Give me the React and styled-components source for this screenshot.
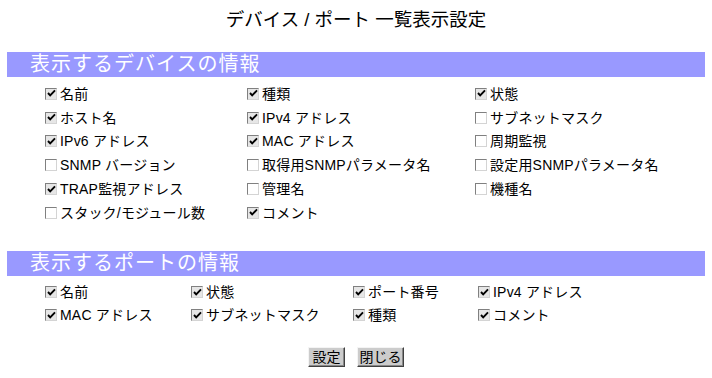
import React, { useState } from 'react';
import styled, { createGlobalStyle } from 'styled-components';

const GlobalStyle = createGlobalStyle`
  html, body {
    margin: 0;
    padding: 0;
    background: #ffffff;
  }
  body {
    font-family: "Liberation Sans", "Noto Sans CJK JP", sans-serif;
    color: #000000;
  }
`;

const deviceItems = [
  ['名前', true], ['種類', true], ['状態', true],
  ['ホスト名', true], ['IPv4 アドレス', true], ['サブネットマスク', false],
  ['IPv6 アドレス', true], ['MAC アドレス', true], ['周期監視', false],
  ['SNMP バージョン', false], ['取得用SNMPパラメータ名', false], ['設定用SNMPパラメータ名', false],
  ['TRAP監視アドレス', true], ['管理名', false], ['機種名', false],
  ['スタック/モジュール数', false], ['コメント', true],
];

const portItems = [
  ['名前', true], ['状態', true], ['ポート番号', true], ['IPv4 アドレス', true],
  ['MAC アドレス', true], ['サブネットマスク', true], ['種類', true], ['コメント', true],
];

function CheckItem({ label, initial }) {
  const [checked, setChecked] = useState(initial);
  return (
    <Item onClick={() => setChecked(!checked)}>
      <Box $checked={checked}>
        {checked && (
          <svg width="9" height="9" viewBox="0 0 9 9">
            <polyline points="1,4 3.2,6.4 8,1.4" fill="none" stroke="#000" strokeWidth="1.9" />
          </svg>
        )}
      </Box>
      <Label>{label}</Label>
    </Item>
  );
}

export default function App() {
  return (
    <>
      <GlobalStyle />
      <Page>
        <Title>デバイス / ポート 一覧表示設定</Title>

        <SectionBar>表示するデバイスの情報</SectionBar>
        <Grid $cols="202px 228px 1fr" $row="23.8px">
          {deviceItems.map(([label, on]) => (
            <CheckItem key={label} label={label} initial={on} />
          ))}
        </Grid>

        <SectionBar $top="26px">表示するポートの情報</SectionBar>
        <Grid $cols="146px 162px 125px 1fr" $row="23px">
          {portItems.map(([label, on]) => (
            <CheckItem key={label} label={label} initial={on} />
          ))}
        </Grid>

        <ButtonRow>
          <Button $w="37px">設定</Button>
          <Button $w="47px">閉じる</Button>
        </ButtonRow>
      </Page>
    </>
  );
}

const Page = styled.div`
  padding: 0 7px;
  width: 698px;
`;

const Title = styled.h1`
  margin: 9px 0 0;
  font-size: 18.5px;
  line-height: 22px;
  font-weight: normal;
  text-align: center;
`;

const SectionBar = styled.div`
  margin-top: ${p => p.$top || '21px'};
  height: 25px;
  line-height: 25px;
  background: #9999ff;
  color: #ffffff;
  font-size: 20px;
  letter-spacing: 1px;
  padding-left: 23px;
`;

const Grid = styled.div`
  display: grid;
  grid-template-columns: ${p => p.$cols};
  grid-auto-rows: ${p => p.$row};
  padding: 5px 0 0 38px;
`;

const Item = styled.label`
  display: flex;
  align-items: center;
  gap: 3px;
  cursor: default;
  user-select: none;
`;

const Box = styled.span`
  display: inline-flex;
  align-items: center;
  justify-content: center;
  box-sizing: border-box;
  width: 12px;
  height: 12px;
  border: 1px solid;
  border-color: #808080 #d4d4d4 #d4d4d4 #808080;
  background: ${p => (p.$checked ? '#e6e6e6' : '#ffffff')};
`;

const Label = styled.span`
  font-size: 14px;
  line-height: 16px;
  letter-spacing: 0.2px;
`;

const ButtonRow = styled.div`
  display: flex;
  justify-content: center;
  gap: 12px;
  margin-top: 20px;
`;

const Button = styled.button`
  box-sizing: border-box;
  width: ${p => p.$w};
  height: 20px;
  padding: 0;
  background: #cccccc;
  border: 1px solid;
  border-color: #f4f4f4 #404040 #404040 #f4f4f4;
  box-shadow: inset -1px -1px 0 #888888;
  font-family: "Liberation Sans", "Noto Sans CJK JP", sans-serif;
  font-size: 14px;
  color: #000000;
  line-height: 16px;
`;
